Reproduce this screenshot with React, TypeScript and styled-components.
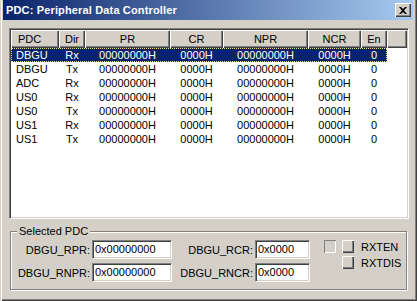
import React from 'react';
import styled, { createGlobalStyle } from 'styled-components';

const GlobalStyle = createGlobalStyle`
    html, body {
        margin: 0;
        padding: 0;
        background: #d4d0c8;
    }
    body {
        font-family: "Liberation Sans", Arial, sans-serif;
        font-size: 11px;
        color: #000;
    }
`

const colWidths = '48px 26px 85px 53px 85px 53px 26px'

type PdcRow = {
    pdc: string
    dir: string
    pr: string
    cr: string
    npr: string
    ncr: string
    en: string
}

const rows: PdcRow[] = [
    { pdc: 'DBGU', dir: 'Rx', pr: '00000000H', cr: '0000H', npr: '00000000H', ncr: '0000H', en: '0' },
    { pdc: 'DBGU', dir: 'Tx', pr: '00000000H', cr: '0000H', npr: '00000000H', ncr: '0000H', en: '0' },
    { pdc: 'ADC', dir: 'Rx', pr: '00000000H', cr: '0000H', npr: '00000000H', ncr: '0000H', en: '0' },
    { pdc: 'US0', dir: 'Rx', pr: '00000000H', cr: '0000H', npr: '00000000H', ncr: '0000H', en: '0' },
    { pdc: 'US0', dir: 'Tx', pr: '00000000H', cr: '0000H', npr: '00000000H', ncr: '0000H', en: '0' },
    { pdc: 'US1', dir: 'Rx', pr: '00000000H', cr: '0000H', npr: '00000000H', ncr: '0000H', en: '0' },
    { pdc: 'US1', dir: 'Tx', pr: '00000000H', cr: '0000H', npr: '00000000H', ncr: '0000H', en: '0' },
]

const headers = ['PDC', 'Dir', 'PR', 'CR', 'NPR', 'NCR', 'En']

export default function App() {
    return (
        <>
            <GlobalStyle />
            <Window>
                <TitleBar>
                    <Title>PDC: Peripheral Data Controller</Title>
                    <CloseButton>
                        <svg width="8" height="7" viewBox="0 0 8 7">
                            <path d="M0 0h2l2 2 2-2h2L5 3.5 8 7H6L4 5 2 7H0l3-3.5z" fill="#000" />
                        </svg>
                    </CloseButton>
                </TitleBar>

                <ListBox>
                    <HeaderRow>
                        {headers.map((h, i) => (
                            <HeaderCell key={h} $left={i === 0}>{h}</HeaderCell>
                        ))}
                        <HeaderCell />
                    </HeaderRow>
                    {rows.map((r, i) => (
                        <Row key={i} $selected={i === 0}>
                            <Cell $left>{r.pdc}</Cell>
                            <Cell>{r.dir}</Cell>
                            <Cell>{r.pr}</Cell>
                            <Cell>{r.cr}</Cell>
                            <Cell>{r.npr}</Cell>
                            <Cell>{r.ncr}</Cell>
                            <Cell>{r.en}</Cell>
                        </Row>
                    ))}
                </ListBox>

                <GroupBox>
                    <Legend>Selected PDC</Legend>
                    <Fields>
                        <Label>DBGU_RPR:</Label>
                        <Edit $width={80}>0x00000000</Edit>
                        <Label>DBGU_RCR:</Label>
                        <Edit $width={55}>0x0000</Edit>
                        <Label>DBGU_RNPR:</Label>
                        <Edit $width={80}>0x00000000</Edit>
                        <Label>DBGU_RNCR:</Label>
                        <Edit $width={55}>0x0000</Edit>
                    </Fields>
                    <Flags>
                        <FlagRow>
                            <Box $sunken />
                            <Box />
                            <FlagText>RXTEN</FlagText>
                        </FlagRow>
                        <FlagRow>
                            <Spacer />
                            <Box />
                            <FlagText>RXTDIS</FlagText>
                        </FlagRow>
                    </Flags>
                </GroupBox>
            </Window>
        </>
    );
}

const Window = styled.div`
    width: 417px;
    height: 301px;
    box-sizing: border-box;
    padding: 0 4px 4px 3px;
    display: flex;
    flex-direction: column;
    background: #d4d0c8;
    box-shadow: inset 1px 0 #d4d0c8, inset 2px 0 #fff,
        inset -1px -1px #404040, inset -2px -2px #808080;
`

const TitleBar = styled.div`
    height: 20px;
    flex: none;
    display: flex;
    align-items: center;
    justify-content: space-between;
    padding: 0 2px 0 3px;
    background: linear-gradient(to right, #0a246a, #a6caf0);
`

const Title = styled.span`
    color: #fff;
    font-weight: bold;
    font-size: 11px;
    letter-spacing: 0.15px;
    white-space: nowrap;
`

const CloseButton = styled.div`
    width: 16px;
    height: 14px;
    box-sizing: border-box;
    display: flex;
    align-items: center;
    justify-content: center;
    background: #d4d0c8;
    box-shadow: inset 1px 1px #fff, inset -1px -1px #404040, inset -2px -2px #808080;
`

const ListBox = styled.div`
    margin: 8px 4px 0 6px;
    height: 191px;
    flex: none;
    box-sizing: border-box;
    background: #fff;
    border: 1px solid;
    border-color: #808080 #fff #fff #808080;
    box-shadow: inset 1px 1px #404040, inset -1px -1px #d4d0c8;
    padding: 1px;
    overflow: hidden;
`

const HeaderRow = styled.div`
    display: grid;
    grid-template-columns: ${colWidths} 1fr;
    height: 18px;
`

const HeaderCell = styled.div<{ $left?: boolean }>`
    background: #d4d0c8;
    box-shadow: inset 1px 1px #fff, inset -1px -1px #404040, inset -2px -2px #808080;
    line-height: 18px;
    text-align: ${p => (p.$left ? 'left' : 'center')};
    padding-left: ${p => (p.$left ? '7px' : '0')};
    white-space: nowrap;
`

const Row = styled.div<{ $selected?: boolean }>`
    display: grid;
    grid-template-columns: ${colWidths};
    width: max-content;
    height: 14px;
    box-sizing: border-box;
    line-height: 14px;
    background: ${p => (p.$selected ? '#0a246a' : 'transparent')};
    color: ${p => (p.$selected ? '#fff' : '#000')};
    outline: ${p => (p.$selected ? '1px dotted #f5db95' : 'none')};
    outline-offset: -1px;
`

const Cell = styled.div<{ $left?: boolean }>`
    text-align: ${p => (p.$left ? 'left' : 'center')};
    padding-left: ${p => (p.$left ? '5px' : '0')};
    white-space: nowrap;
`

const GroupBox = styled.div`
    position: relative;
    margin: 12px 6px 0 7px;
    height: 59px;
    flex: none;
    box-sizing: border-box;
    border: 1px solid #808080;
    box-shadow: inset 1px 1px #fff, 1px 1px #fff;
    display: flex;
    align-items: flex-start;
    padding: 8px 0 0 6px;
`

const Legend = styled.span`
    position: absolute;
    top: -7px;
    left: 6px;
    padding: 0 2px;
    background: #d4d0c8;
    line-height: 13px;
`

const Fields = styled.div`
    display: grid;
    grid-template-columns: 75px 80px 83px 55px;
    grid-auto-rows: 19px;
    row-gap: 4px;
    align-items: center;
`

const Label = styled.span`
    text-align: right;
    padding-right: 2px;
    white-space: nowrap;
`

const Edit = styled.div<{ $width: number }>`
    width: ${p => p.$width}px;
    height: 19px;
    box-sizing: border-box;
    background: #fff;
    border: 1px solid;
    border-color: #808080 #fff #fff #808080;
    box-shadow: inset 1px 1px #404040, inset -1px -1px #d4d0c8;
    padding: 0 2px;
    line-height: 17px;
`

const Flags = styled.div`
    display: flex;
    flex-direction: column;
    gap: 3px;
    margin-left: 14px;
`

const FlagRow = styled.div`
    display: flex;
    align-items: center;
    gap: 6px;
    height: 13px;
`

const Box = styled.span<{ $sunken?: boolean }>`
    width: 12px;
    height: 13px;
    box-sizing: border-box;
    background: #d4d0c8;
    box-shadow: ${p =>
        p.$sunken
            ? 'inset 1px 1px #808080, inset -1px -1px #fff'
            : 'inset 1px 1px #fff, inset -1px -1px #404040, inset -2px -2px #808080'};
`

const Spacer = styled.span`
    width: 12px;
`

const FlagText = styled.span`
    margin-left: 1px;
    white-space: nowrap;
`
